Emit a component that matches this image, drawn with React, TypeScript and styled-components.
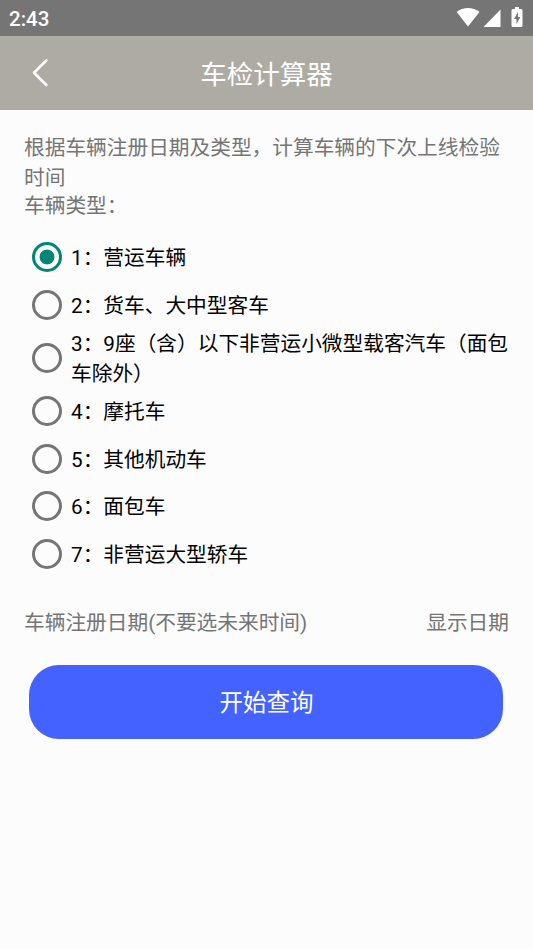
import React, { useState } from "react";
import styled, { createGlobalStyle } from "styled-components";

const Global = createGlobalStyle`
  * { box-sizing: border-box; }
  body { margin: 0; background: #fcfcfc; }
`;

const Screen = styled.div`
  width: 533px;
  height: 949px;
  overflow: hidden;
  background: #fcfcfc;
  font-family: Roboto, "Noto Sans CJK SC", sans-serif;
  color: #757575;
`;

const StatusBar = styled.div`
  height: 36px;
  background: #757575;
  color: #fff;
  display: flex;
  align-items: center;
  justify-content: space-between;
  padding: 1px 9px 0;
  font-size: 20.5px;
  font-weight: 500;
`;

const StatusIcons = styled.svg`
  display: block;
  width: 68px;
  height: 23px;
  margin-bottom: 2px;
`;

const Header = styled.header`
  height: 74px;
  background: #adaba3;
  color: #fff;
  display: grid;
  grid-template-columns: 80px 1fr 80px;
  align-items: center;
`;

const Back = styled.svg`
  width: 18px;
  height: 30px;
  margin-left: 31px;
`;

const Title = styled.h1`
  margin: 0;
  padding-top: 3px;
  text-align: center;
  font-size: 26.5px;
  font-weight: 400;
  line-height: 38px;
`;

const Content = styled.main`
  padding: 23px 24px 0;
  font-size: 20.7px;
`;

const Intro = styled.p`
  margin: 0;
  line-height: 30px;
`;

const Label = styled.div`
  line-height: 26px;
`;

const Options = styled.div`
  padding-top: 14.5px;
  margin-right: -6px;
  color: #000;
`;

const Option = styled.label<{ $tall?: boolean }>`
  display: flex;
  align-items: center;
  height: ${(p) => (p.$tall ? "59px" : "47.5px")};
  padding-left: 8px;
  gap: 9px;
  line-height: 30px;
`;

const OptionText = styled.span`
  padding-top: 2px;
`;

const Radio = styled.input`
  appearance: none;
  margin: 0;
  width: 30px;
  height: 30px;
  flex: none;
  border: 3px solid #757575;
  border-radius: 50%;
  &:checked {
    border-color: #008577;
    background: radial-gradient(circle, #008577 7px, transparent 7.8px);
  }
`;

const DateRow = styled.div`
  display: flex;
  justify-content: space-between;
  line-height: 30px;
  margin-top: 30px;
`;

const Submit = styled.button`
  display: block;
  width: 474px;
  height: 74px;
  margin: 27.500px 0 0 5.400px;
  padding: 0 0 2px;
  border: 0;
  border-radius: 30px;
  background: #4462ff;
  color: #fff;
  font: inherit;
  font-size: 23.5px;
`;

const options = [
  "1：营运车辆",
  "2：货车、大中型客车",
  "3：9座（含）以下非营运小微型载客汽车（面包车除外）",
  "4：摩托车",
  "5：其他机动车",
  "6：面包车",
  "7：非营运大型轿车",
];

export default function App() {
  const [selected, setSelected] = useState(0);
  return (
    <Screen lang="zh-CN">
      <Global />
      <StatusBar>
        <span>2:43</span>
        <StatusIcons viewBox="0 0 68 23" fill="#fff">
          <path d="M0.700 6C7 .7 17 .7 23.500 6L12 20.500Z" />
          <path d="M44.500 3.500V21H27.500Z" />
          <path fillRule="evenodd" d="M59 1h4v2h2q1.500 0 1.500 1.500v15q0 1.500-1.500 1.500h-8q-1.500 0-1.500-1.500v-15q0-1.500 1.500-1.500h2zM62 6l-4 7h2.500v5l3.800-7H62z" />
        </StatusIcons>
      </StatusBar>
      <Header>
        <Back viewBox="0 0 18 30" fill="none" stroke="#fff" strokeWidth="2.7" strokeLinecap="round" strokeLinejoin="round">
          <path d="M15.300 2.500L3 14.700L15.300 27" />
        </Back>
        <Title>车检计算器</Title>
      </Header>
      <Content>
        <Intro>根据车辆注册日期及类型，计算车辆的下次上线检验时间</Intro>
        <Label>车辆类型：</Label>
        <Options>
          {options.map((text, i) => (
            <Option key={text} $tall={i === 2}>
              <Radio type="radio" name="type" checked={selected === i} onChange={() => setSelected(i)} />
              <OptionText>{text}</OptionText>
            </Option>
          ))}
        </Options>
        <DateRow>
          <span>车辆注册日期(不要选未来时间)</span>
          <span>显示日期</span>
        </DateRow>
        <Submit>开始查询</Submit>
      </Content>
    </Screen>
  );
}
